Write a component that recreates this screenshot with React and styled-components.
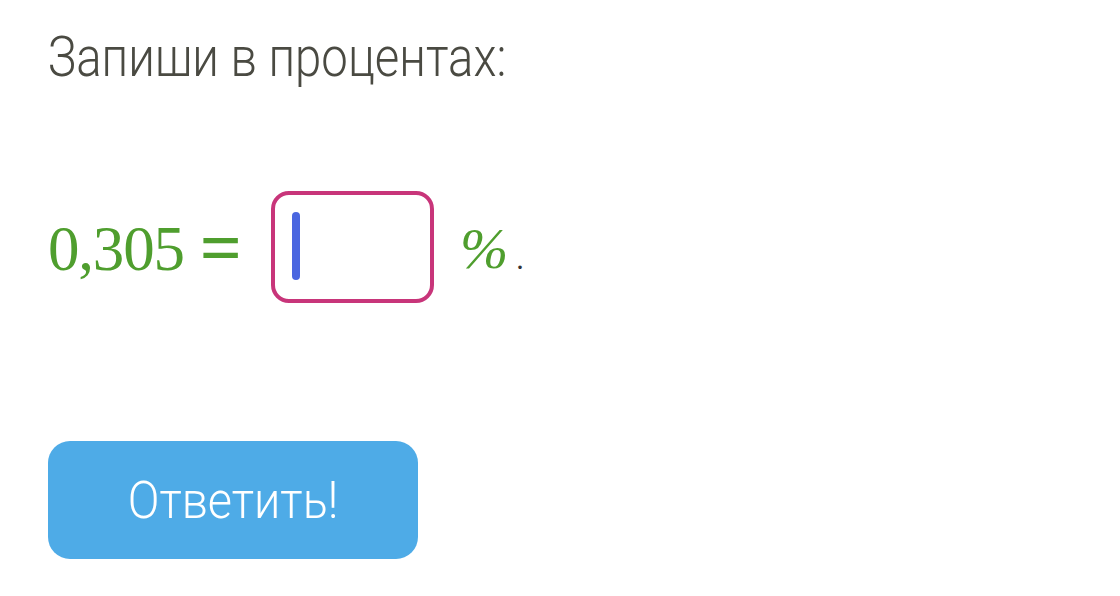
import React from "react";
import styled, { createGlobalStyle } from "styled-components";

const GlobalStyle = createGlobalStyle`
  html, body {
    margin: 0;
    padding: 0;
    background: #ffffff;
  }
`;

export const Page = styled.div`
  display: flex;
  flex-direction: column;
  align-items: flex-start;
  padding: 22px 48px 0;
`;

export const Title = styled.h1`
  margin: 0;
  font-family: Roboto, "Liberation Sans", sans-serif;
  font-weight: 300;
  font-size: 56px;
  line-height: 70px;
  color: #4a4a42;
  transform: scaleX(0.845);
  transform-origin: left center;
  white-space: nowrap;
`;

export const Equation = styled.div`
  display: flex;
  align-items: center;
  margin-top: 99px;
  font-family: "Liberation Serif", "Times New Roman", serif;
  color: #4f9e2e;
`;

export const Number = styled.span`
  font-size: 63px;
  letter-spacing: -1.2px;
  line-height: 1;
  padding-top: 4px;
`;

export const Equals = styled.span`
  font-size: 74px;
  font-weight: 700;
  line-height: 1;
  margin-left: 16px;
  padding-top: 2px;
`;

export const AnswerBox = styled.div`
  box-sizing: border-box;
  width: 163px;
  height: 112px;
  margin-left: 29px;
  border: 4.5px solid #c8357a;
  border-radius: 18px;
  padding: 17px 0 0 17px;
`;

export const Caret = styled.div`
  width: 8px;
  height: 68px;
  border-radius: 4px;
  background: #4a66e0;
`;

export const Percent = styled.span`
  font-size: 58px;
  font-style: italic;
  line-height: 1;
  margin-left: 26px;
  padding-top: 4px;
`;

export const Dot = styled.span`
  font-size: 30px;
  color: #333333;
  margin-left: 8px;
  padding-top: 24px;
`;

export const SubmitButton = styled.button`
  margin-top: 138px;
  width: 370px;
  height: 118px;
  border: none;
  border-radius: 22px;
  background: #4eabe7;
  color: #ffffff;
  font-family: Roboto, "Liberation Sans", sans-serif;
  font-weight: 300;
  font-size: 52px;
  padding: 0;
  cursor: pointer;
`;

export const ButtonLabel = styled.span`
  display: inline-block;
  transform: scaleX(0.9);
`;

const App = () => {
  return (
    <>
      <GlobalStyle />
      <Page>
        <Title>Запиши в процентах:</Title>
        <Equation>
          <Number>0,305</Number>
          <Equals>=</Equals>
          <AnswerBox>
            <Caret />
          </AnswerBox>
          <Percent>%</Percent>
          <Dot>.</Dot>
        </Equation>
        <SubmitButton>
          <ButtonLabel>Ответить!</ButtonLabel>
        </SubmitButton>
      </Page>
    </>
  );
};

export default App;
